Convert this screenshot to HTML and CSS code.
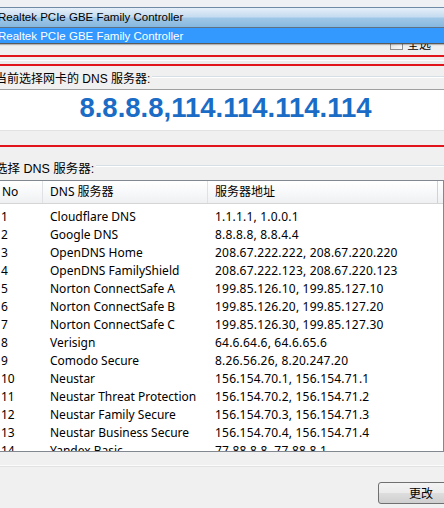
FILE: index.html
```html
<!DOCTYPE html>
<html lang="zh-CN">
<head>
  <meta charset="UTF-8"/>
  <title>DNS 设置</title>
  <link rel="stylesheet" href="styles.css">
</head>
<body>
  <div class="topstrip"></div>
  <div class="combo"><span>Realtek PCIe GBE Family Controller</span></div>
  <div class="options">
    <div class="dropdown"><span>Realtek PCIe GBE Family Controller</span></div>
    <label class="check"><span class="box"></span>全选</label>
  </div>
  <div class="mark"></div>
  <div class="mark-gap"></div>
  <div class="mark"></div>

  <div class="group-head"><span class="cut">当前选择网卡的 DNS 服务器:</span><span class="rule"></span></div>
  <div class="current">8.8.8.8,114.114.114.114</div>
  <div class="spacer"></div>
  <div class="mark"></div>

  <div class="group-head second"><span class="cut">选择 DNS 服务器:</span><span class="rule"></span></div>
  <div class="list">
    <div class="row head">
      <div class="c-no">No</div>
      <div class="c-name">DNS 服务器</div>
      <div class="c-addr">服务器地址</div>
    </div>
    <div class="rows" id="rows"></div>
  </div>
  <div class="bottom-rule"></div>
  <div class="actions"><button class="btn">更改</button></div>

<script>
  const servers=[
    ['Cloudflare DNS','1.1.1.1, 1.0.0.1'],
    ['Google DNS','8.8.8.8, 8.8.4.4'],
    ['OpenDNS Home','208.67.222.222, 208.67.220.220'],
    ['OpenDNS FamilyShield','208.67.222.123, 208.67.220.123'],
    ['Norton ConnectSafe A','199.85.126.10, 199.85.127.10'],
    ['Norton ConnectSafe B','199.85.126.20, 199.85.127.20'],
    ['Norton ConnectSafe C','199.85.126.30, 199.85.127.30'],
    ['Verisign','64.6.64.6, 64.6.65.6'],
    ['Comodo Secure','8.26.56.26, 8.20.247.20'],
    ['Neustar','156.154.70.1, 156.154.71.1'],
    ['Neustar Threat Protection','156.154.70.2, 156.154.71.2'],
    ['Neustar Family Secure','156.154.70.3, 156.154.71.3'],
    ['Neustar Business Secure','156.154.70.4, 156.154.71.4'],
    ['Yandex Basic','77.88.8.8, 77.88.8.1']
  ];
  const list=document.getElementById('rows');
  servers.forEach((s,i)=>{
    const div=document.createElement('div'); div.className='row';
    div.innerHTML=`<div class="c-no">${i+1}</div><div class="c-name">${s[0]}</div><div class="c-addr">${s[1]}</div>`;
    list.appendChild(div);
  });
</script>
</body>
</html>
```

FILE: styles.css
```css
*{box-sizing:border-box;margin:0;padding:0;}
html,body{width:444px;height:508px;overflow:hidden;}
body{font-family:"Noto Sans","Noto Sans CJK SC",sans-serif;font-size:12px;color:#000;background:#f0f0f0;}
.topstrip{height:7px;background:#eef0f3;}
.combo{height:21px;line-height:19px;border-top:1px solid #6f8aa5;border-bottom:1px solid #5d7084;background:linear-gradient(#e6eff9,#c6dcf0 45%,#9ec6e6 55%,#86b7df);}
.combo span,.dropdown span{display:block;margin-left:-2px;white-space:nowrap;font-family:"Liberation Sans","Noto Sans CJK SC",sans-serif;font-size:11.5px;}
.options{position:relative;height:27px;display:flex;justify-content:flex-end;padding:9px 13px 0 0;}
.dropdown{position:absolute;top:0;left:0;right:0;height:16px;line-height:16px;background:#3399ff;color:#fff;border-bottom:1px solid #5a5a5a;box-shadow:0 1px 1px rgba(0,0,0,0.25);z-index:2;}
.check{display:flex;align-items:center;gap:4px;height:13px;line-height:13px;font-family:"Noto Sans CJK SC",sans-serif;}
.box{width:13px;height:13px;border:1px solid #8e8f8f;background:linear-gradient(135deg,#dcdcdc,#fafafa);}
.mark{height:2px;background:#e0141a;}
.mark-gap{height:7px;background:linear-gradient(#efefef 0 3px,#fdfdfd 3px 4px,#ececec 4px);}
.group-head{display:flex;align-items:center;height:23px;}
.cut{margin-left:-5px;white-space:nowrap;padding-right:2px;font-family:"Liberation Sans","Noto Sans CJK SC",sans-serif;}
.second .cut{font-size:12.5px;}
.rule{flex:1;height:2px;border-top:1px solid #d5dfe5;border-bottom:1px solid #fff;margin-top:-2px;}
.current{height:42px;background:#fff;border-top:1px solid #a0a0a0;border-bottom:1px solid #e3e3e3;text-align:center;padding-left:7px;font-family:"Liberation Sans",sans-serif;font-weight:bold;font-size:27.5px;line-height:35px;color:#1a6cc6;}
.spacer{height:14px;}
.group-head.second{height:33px;padding-top:7px;}
.list{height:272px;overflow:hidden;border-top:1px solid #828790;border-bottom:1px solid #828790;border-right:1px solid #828790;background:#fff;width:444px;}
.row{display:flex;height:18px;line-height:18px;white-space:nowrap;}
.row.head{height:23px;line-height:22px;background:linear-gradient(#fff,#f6f7f8 60%,#eef0f2);border-bottom:1px solid #d5d5d5;}
.rows{padding-top:4px;}
.c-no{width:43px;padding-left:1px;}
.c-name{width:165px;padding-left:7px;}
.c-addr{flex:1;padding-left:7px;}
.rows .c-addr{letter-spacing:0.2px;}
.head .c-no{padding-left:2px;}
.head .c-no,.head .c-name{border-right:1px solid #dfe1e4;}
.head .c-addr{flex:none;width:230px;border-right:1px solid #d0d3d6;}
.bottom-rule{height:14px;border-bottom:1px solid #fbfbfb;box-shadow:0 1px 0 #e2e2e2;}
.actions{display:flex;justify-content:flex-end;padding-top:16px;}
.btn{width:86px;height:22px;margin-right:-20px;border:1px solid #707070;border-radius:3px;background:linear-gradient(#f3f3f3,#ebebeb 50%,#dddddd 51%,#cfcfcf);font-family:"Noto Sans CJK SC",sans-serif;font-size:12px;line-height:20px;color:#000;}
```
